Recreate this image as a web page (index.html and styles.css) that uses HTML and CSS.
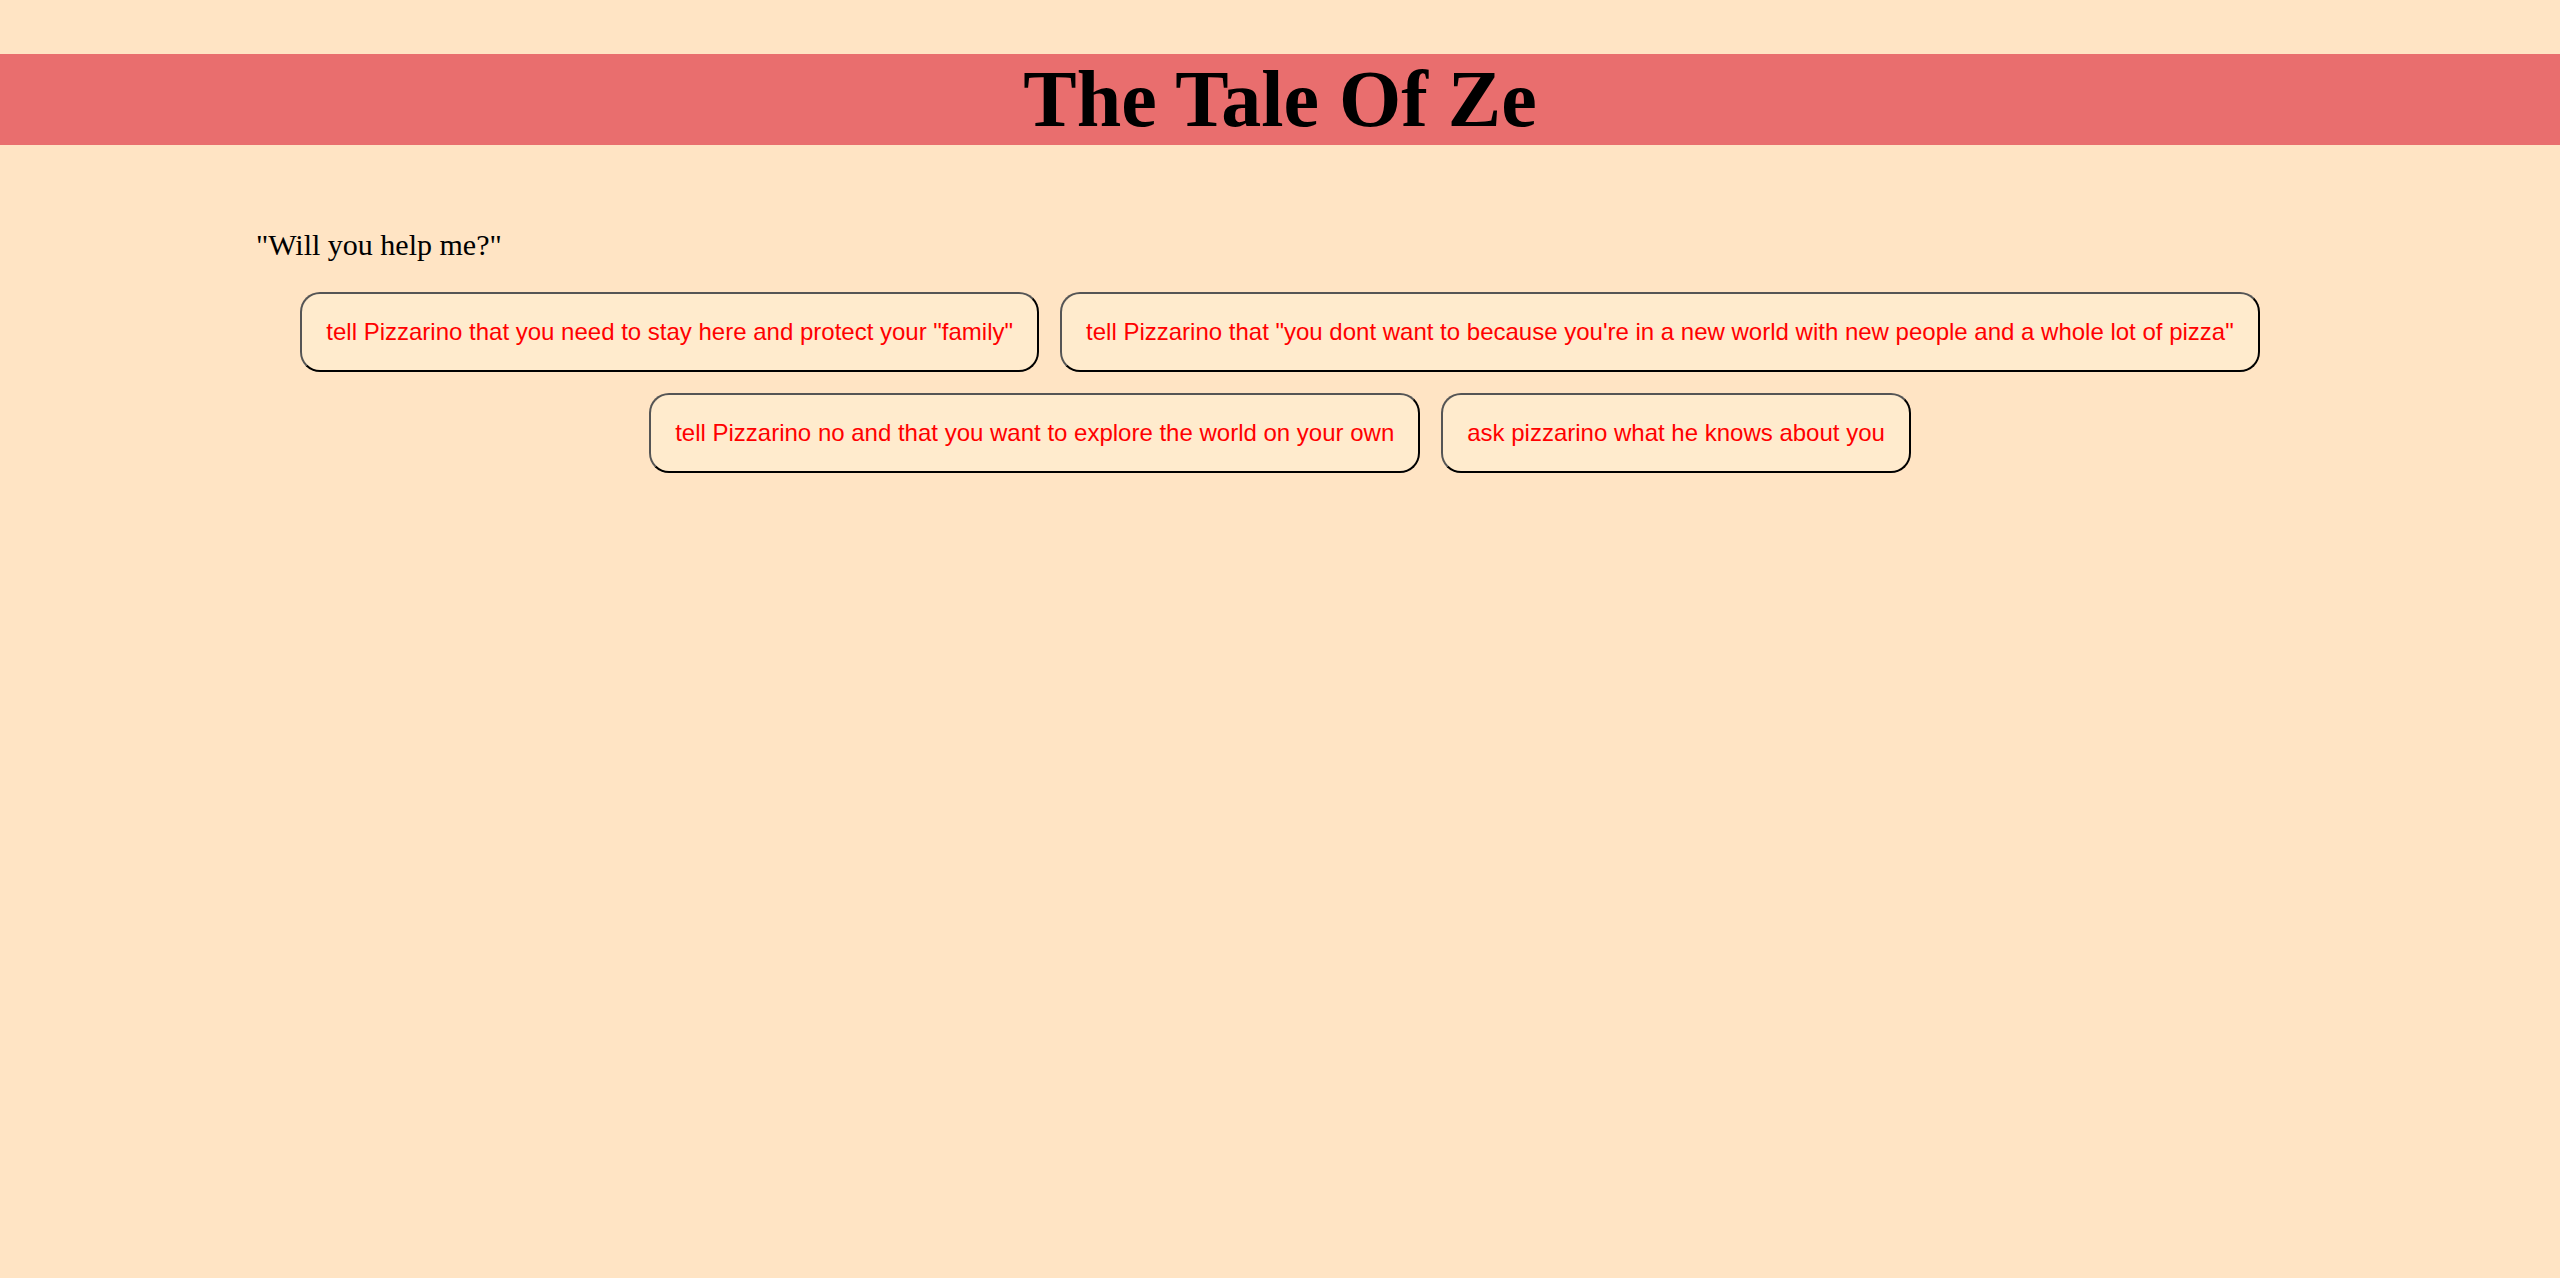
FILE: index.html
```html
<!DOCTYPE html>
<html>
<head>
<meta charset="utf-8">
<title>The Tale Of Ze</title>
<link rel="stylesheet" href="styles.css">
</head>
<body>
<h1 class="title">The Tale Of Ze</h1>
<main class="story">
  <p class="prompt">"Will you help me?"</p>
  <div class="choices">
    <button class="choice">tell Pizzarino that you need to stay here and protect your "family"</button>
    <button class="choice">tell Pizzarino that "you dont want to because you're in a new world with new people and a whole lot of pizza"</button>
    <button class="choice">tell Pizzarino no and that you want to explore the world on your own</button>
    <button class="choice">ask pizzarino what he knows about you</button>
  </div>
</main>
</body>
</html>
```

FILE: styles.css
```css
html, body {
  margin: 0;
  background: #ffe4c4;
  font-family: "Liberation Serif", "Times New Roman", serif;
}

.title {
  margin: 0.67em 0;
  font-size: 80px;
  font-weight: bold;
  text-align: center;
  background: #e96e6e;
  color: #000;
}

.story {
  padding: 0 256px;
}

.prompt {
  font-size: 30px;
  margin: 83px 0 30px;
}

.choices {
  display: flex;
  flex-wrap: wrap;
  justify-content: center;
  gap: 21px;
}

.choice {
  font-family: "Liberation Sans", Arial, sans-serif;
  font-size: 24px;
  color: #ff0000;
  background: #ffebcd;
  border: 2px solid #000;
  border-top-color: #555;
  border-left-color: #555;
  border-radius: 20px;
  padding: 24px;
  line-height: normal;
}
```
